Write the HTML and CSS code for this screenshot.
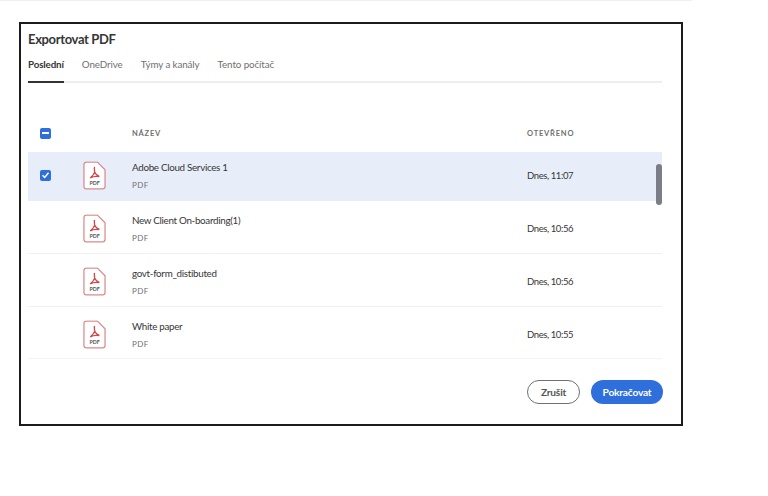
FILE: index.html
```html
<!DOCTYPE html>
<html lang="cs">
<head>
    <meta charset="UTF-8">
    <title>Exportovat PDF</title>
    <link rel="stylesheet" href="styles.css">
</head>
<body>
    <div class="top-edge"></div>
    <svg class="icon-defs" width="0" height="0">
        <symbol id="pdf-icon" viewBox="0 0 24 30">
            <path d="M3.500 1h11.500l8 8v17.500a2.500 2.500 0 0 1-2.500 2.500h-17a2.500 2.500 0 0 1-2.500-2.500v-23a2.500 2.500 0 0 1 2.500-2.500z" fill="#fff" stroke="#d98a8c" stroke-width="1.300"/>
            <path d="M12 6c-.6 2.500.5 4.500 0 6-.6 2-2.300 3.700-4.500 5.500M12.200 11.500c.7 1.700 2 3 4.800 4.700-3.500-.6-6.500-.2-9.500 1.300" fill="none" stroke="#d2474a" stroke-width="1.400"/>
        </symbol>
    </svg>
    <div class="dialog">
        <h1>Exportovat PDF</h1>
        <nav class="tabs">
            <span class="tab active">Poslední</span>
            <span class="tab">OneDrive</span>
            <span class="tab">Týmy a kanály</span>
            <span class="tab">Tento počítač</span>
        </nav>
        <div class="table-head">
            <div class="col-check"><span class="checkbox minus"></span></div>
            <div class="col-icon"></div>
            <div class="col-name">NÁZEV</div>
            <div class="col-date">OTEVŘENO</div>
        </div>
        <div class="list">
            <div class="row selected">
                <div class="col-check">
                    <span class="checkbox">
                        <svg width="12" height="12" viewBox="0 0 12 12"><path d="M2.800 6.200l2.300 2.400 4.200-5" fill="none" stroke="#fff" stroke-width="1.600"/></svg>
                    </span>
                </div>
                <div class="col-icon"><svg class="pdf" width="23" height="29" viewBox="0 0 24 30"><use href="#pdf-icon"/><text x="12" y="25" class="pdf-label">PDF</text></svg></div>
                <div class="col-name"><div class="file-name">Adobe Cloud Services 1</div><div class="file-type">PDF</div></div>
                <div class="col-date">Dnes, 11:07</div>
            </div>
            <div class="row tall">
                <div class="col-check"></div>
                <div class="col-icon"><svg class="pdf" width="23" height="29" viewBox="0 0 24 30"><use href="#pdf-icon"/><text x="12" y="25" class="pdf-label">PDF</text></svg></div>
                <div class="col-name"><div class="file-name">New Client On-boarding(1)</div><div class="file-type">PDF</div></div>
                <div class="col-date">Dnes, 10:56</div>
            </div>
            <div class="row tall">
                <div class="col-check"></div>
                <div class="col-icon"><svg class="pdf" width="23" height="29" viewBox="0 0 24 30"><use href="#pdf-icon"/><text x="12" y="25" class="pdf-label">PDF</text></svg></div>
                <div class="col-name"><div class="file-name">govt-form_distibuted</div><div class="file-type">PDF</div></div>
                <div class="col-date">Dnes, 10:56</div>
            </div>
            <div class="row last">
                <div class="col-check"></div>
                <div class="col-icon"><svg class="pdf" width="23" height="29" viewBox="0 0 24 30"><use href="#pdf-icon"/><text x="12" y="25" class="pdf-label">PDF</text></svg></div>
                <div class="col-name"><div class="file-name">White paper</div><div class="file-type">PDF</div></div>
                <div class="col-date">Dnes, 10:55</div>
            </div>
            <div class="scrollbar"></div>
        </div>
        <div class="actions">
            <button class="btn btn-cancel">Zrušit</button>
            <button class="btn btn-primary">Pokračovat</button>
        </div>
    </div>
</body>
</html>
```

FILE: styles.css
```css
:root {
    --text-color: #363636;
    --muted-color: #707070;
    --blue: #2f6fdc;
}
body {
    margin: 0;
    background-color: #fff;
    color: var(--text-color);
    font-family: 'Lato', sans-serif;
}
.top-edge {
    width: 692px;
    height: 1px;
    background-color: #f0f0f0;
}
.icon-defs {
    position: absolute;
}
.dialog {
    box-sizing: border-box;
    width: 664px;
    height: 404px;
    margin: 21px 0 0 19px;
    padding: 7px 19px 0 7px;
    border: 2px solid #1c1c1c;
}
h1 {
    margin: 0;
    font-size: 13px;
    line-height: 16px;
    font-weight: 700;
    letter-spacing: -0.35px;
}
.tabs {
    display: flex;
    gap: 18px;
    margin-top: 9px;
    height: 25px;
    border-bottom: 2px solid #eeeeee;
}
.tab {
    height: 25px;
    font-size: 9.800px;
    line-height: 17px;
    letter-spacing: -0.1px;
    color: var(--muted-color);
}
.tab.active {
    color: var(--text-color);
    font-weight: 700;
    letter-spacing: -0.15px;
    border-bottom: 2px solid #333;
}
.table-head {
    display: flex;
    align-items: center;
    height: 26px;
    margin-top: 37px;
    margin-bottom: 6px;
    font-size: 7.500px;
    font-weight: 700;
    letter-spacing: 0.8px;
    color: var(--muted-color);
}
.col-check {
    flex: 0 0 55px;
    display: flex;
    justify-content: center;
    padding-right: 21px;
    box-sizing: border-box;
}
.col-icon {
    flex: 0 0 49px;
    display: flex;
}
.col-name {
    flex: 1;
}
.col-date {
    flex: 0 0 135px;
}
.list {
    position: relative;
    border-bottom: 1px solid #f4f4f4;
}
.row {
    display: flex;
    align-items: center;
    height: 50px;
    padding-top: 2px;
    border-bottom: 1px solid #f1f1f1;
    box-sizing: border-box;
    font-size: 9.500px;
    letter-spacing: -0.4px;
}
.row.tall {
    height: 53px;
}
.row.last {
    height: 51px;
    padding-top: 3px;
    border-bottom: none;
}
.row.selected {
    height: 49px;
    padding-top: 0;
    padding-bottom: 3px;
    background-color: #e8eef9;
    border-bottom: none;
}
.checkbox {
    display: flex;
    align-items: center;
    justify-content: center;
    width: 11px;
    height: 11px;
    border-radius: 2px;
    background-color: var(--blue);
}
.checkbox.minus::before {
    content: '';
    width: 7px;
    height: 2px;
    background-color: #fff;
}
.file-name {
    font-size: 9.800px;
    line-height: 14px;
    letter-spacing: -0.3px;
    margin-bottom: 5px;
}
.file-type {
    font-size: 8px;
    line-height: 12px;
    color: var(--muted-color);
    letter-spacing: 0.4px;
}
.pdf-label {
    font-size: 5.500px;
    font-weight: 700;
    letter-spacing: 0;
    text-anchor: middle;
    fill: #555;
}
.scrollbar {
    position: absolute;
    top: 12px;
    right: 0;
    width: 6px;
    height: 41px;
    border-radius: 3px;
    background-color: #7b7e86;
}
.actions {
    display: flex;
    justify-content: flex-end;
    gap: 11px;
    margin-top: 21px;
    margin-right: -1px;
}
.btn {
    height: 24px;
    padding: 0;
    border-radius: 12px;
    font-family: inherit;
    font-size: 10.200px;
    font-weight: 700;
    letter-spacing: -0.2px;
}
.btn-cancel {
    width: 53px;
    background-color: #fff;
    border: 1.500px solid #707070;
    color: #555;
}
.btn-primary {
    width: 72px;
    border: none;
    background-color: var(--blue);
    color: #fff;
}
```
